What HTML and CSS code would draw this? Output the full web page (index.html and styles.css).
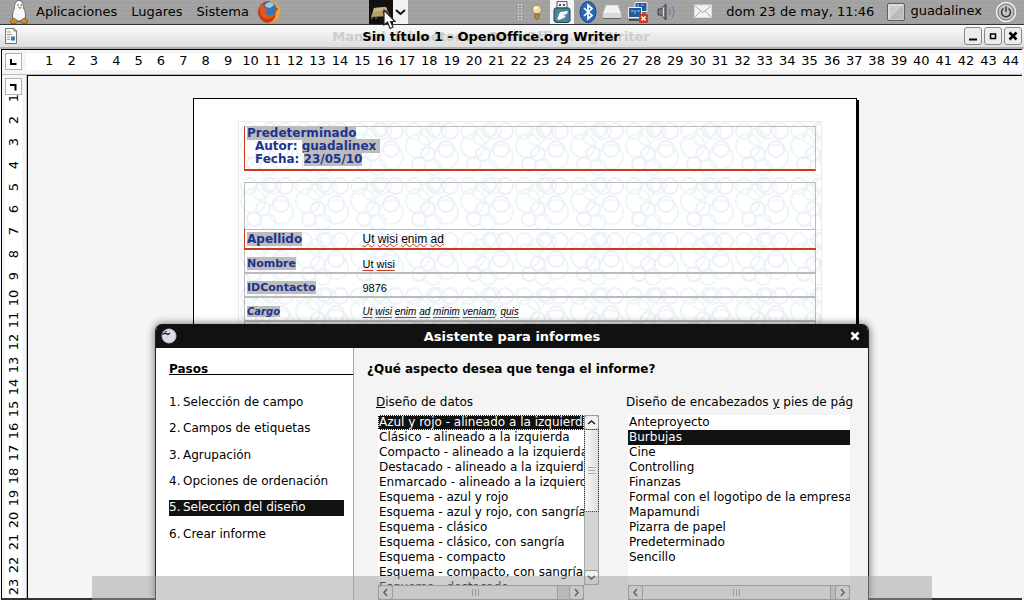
FILE: index.html
```html
<!DOCTYPE html>
<html lang="es">
<head>
<meta charset="utf-8">
<title>Sin título 1 - OpenOffice.org Writer</title>
<link rel="stylesheet" href="styles.css">
</head>
<body>
<header class="panel">
  <nav class="menus">
    <svg class="penguin" width="20" height="24" viewBox="0 0 20 24"><path d="M10 0C6 0 5.500 4 5.500 7C4 10 2.500 14 3 18L6 22H14L17 18C17.500 14 16 10 14.500 7C14.500 3 14 0 10 0Z" fill="#6a7078"/><path d="M10 1C7 1 6 4 6 8C4 12 3.500 16 4.500 19Q10 22 15.500 19C16.500 15 16 11 14 8C14 3 13 1 10 1Z" fill="#f7f8fa"/><circle cx="9" cy="5" r=".8" fill="#444"/><circle cx="12.500" cy="5" r=".8" fill="#444"/><path d="M9 6.500L13 7L11 9.500Z" fill="#e08a1c"/><path d="M1 21L5 18L9 21L7 23.500H2ZM19 21L15 18L11 21L13 23.500H18Z" fill="#c98a2a" stroke="#684613" stroke-width=".6"/></svg>
    <button class="menu">Aplicaciones</button>
    <button class="menu">Lugares</button>
    <button class="menu">Sistema</button>
    <button class="launcher" aria-label="Firefox"><svg width="26" height="24" viewBox="0 0 26 24"><circle cx="13" cy="12" r="11" fill="#c73a16"/><path d="M13 1C20 0 25 6 24.500 12C24 20 17 24 12 23C18 21 20 17 19.500 12L22 9Z" fill="#e8a33c"/><circle cx="13.500" cy="9" r="7" fill="#3b74b5"/><path d="M9 5C12 1 17 2 18 5L14 8L10 7Z" fill="#9ccbea"/><path d="M3 6L7 4L8 8L12 10L9 13C11 16 15 16 19 14C17 20 8 20 5 15Z" fill="#de5b1f"/></svg></button>
  </nav>
  <div class="applet">
    <span class="applet-icon"><svg width="24" height="24" viewBox="0 0 24 24"><path d="M5 8L17 7L21 16L2 17Z" fill="#b3a06b"/><path d="M5 8L17 7L18 10L4 12Z" fill="#c5b58a"/><path d="M3 17V19M7 17V19" stroke="#8d8470"/><path d="M13 12L18 10L21 17H16Z" fill="#c62d14"/></svg></span>
    <button class="applet-more" aria-label="Mostrar más"><svg width="15" height="24" viewBox="0 0 15 24"><path d="M3 10L7.500 14L12 10" fill="none" stroke="#111" stroke-width="2"/></svg></button>
    <svg class="cursor" width="14" height="22" viewBox="0 0 14 22"><path d="M1 1V16L4.500 13L7 19.500L10 18L7.500 12.500H12Z" fill="#fff" stroke="#222" stroke-width="1.200"/></svg>
  </div>
  <div class="tray">
    <span class="handle"></span>
    <svg width="16" height="24" viewBox="0 0 16 24"><circle cx="8" cy="9.500" r="4.500" fill="#efdca6" stroke="#a08648"/><circle cx="6.500" cy="8" r="1.800" fill="#fff8df"/><path d="M6 14H10V18L8 20L6 18Z" fill="#b88e35" stroke="#72591f" stroke-width=".7"/></svg>
    <svg class="usb" width="24" height="24" viewBox="0 0 24 24"><path d="M7 1.500H17V8H7Z" fill="#f0f0ee" stroke="#575d61"/><path d="M9 4H11V6H9ZM13 4H15V6H13Z" fill="#555"/><path d="M5 8H19L20 10V21Q19 22.500 17 22.500H7Q5 22.500 4 21V10Z" fill="#4b8499" stroke="#214756"/><path d="M7 19L10 12L18 11L17 14L13 15L16 16L14 18L9 20Z" fill="#f4fafb"/></svg>
    <svg width="18" height="24" viewBox="0 0 18 24"><ellipse cx="9" cy="12" rx="8" ry="10.500" fill="#2869b3" stroke="#174c8b"/><path d="M5 8L13 15.500L9 19V5L13 8.500L5 16" fill="none" stroke="#fff" stroke-width="1.700"/></svg>
    <svg width="20" height="24" viewBox="0 0 20 24"><path d="M4 5H16L19 13V18H1V13Z" fill="#f1f1f0" stroke="#b4b4b4" stroke-width=".7"/><path d="M1 13H19V18Q10 20 1 18Z" fill="#d9d9d9"/><path d="M1 18.500H19" stroke="#666"/></svg>
    <svg width="22" height="24" viewBox="0 0 22 24"><path d="M8 2.500H20V11.500H8Z" fill="#245a9c" stroke="#e8edf3"/><path d="M9 13H19" stroke="#333"/><path d="M1.500 7.500H14.500V17.500H1.500Z" fill="#245a9c" stroke="#eef1f4"/><path d="M4 11H7M8 10V14M10 11H13M11 4V7M14 5H17" stroke="#9fc3e3"/><path d="M2 20H13" stroke="#333" stroke-width="1.500"/><rect x="12" y="14" width="9" height="9" rx="1.500" fill="#cf3b1d"/><path d="M14.500 16.500L18.500 20.500M18.500 16.500L14.500 20.500" stroke="#fff" stroke-width="1.600"/></svg>
    <svg width="24" height="24" viewBox="0 0 24 24"><path d="M4 9H7L12 4V20L7 15H4Z" fill="#75797c" stroke="#3f4346"/><path d="M9.500 7V17" stroke="#ddd"/><path d="M15 9Q17 12 15 15M18 6.500Q22 12 18 17.500" fill="none" stroke="#6585ad" stroke-width="1.300"/></svg>
  </div>
  <div class="session">
    <svg width="20" height="24" viewBox="0 0 20 24"><rect x="1.500" y="5" width="17" height="12.500" fill="#f3f3f1" stroke="#ddd"/><path d="M2 6L10 12.500L18 6M2 17L8 11M18 17L12 11" fill="none" stroke="#aaa"/></svg>
    <time>dom 23 de may, 11:46</time>
    <button class="user"><svg width="18" height="24" viewBox="0 0 18 24"><rect x=".5" y="3.500" width="17" height="17" rx="1.500" fill="#c9cccb" stroke="#5a6268"/><path d="M2 19L16 5V19Z" fill="#b9bdba"/><path d="M2 5H16M2 5V19" stroke="#eee"/></svg>guadalinex</button>
    <button class="power" aria-label="Apagar"><svg width="22" height="24" viewBox="0 0 22 24"><circle cx="11" cy="12" r="9.500" fill="#c2c2c0" stroke="#f0f0f0" stroke-width="1.500"/><circle cx="11" cy="12" r="8" fill="none" stroke="#777"/><path d="M11 6.500V12M8.500 8.500A4.500 4.500 0 1 0 13.500 8.500" fill="none" stroke="#333" stroke-width="1.400"/></svg></button>
  </div>
</header>

<div class="titlebar">
  <svg class="doc-icon" width="14" height="18" viewBox="0 0 14 18"><path d="M1.500 1.500H10L12.500 4V16.500H1.500Z" fill="#fafafa" stroke="#75736c"/><path d="M3 5H7M3 7.500H8M3 10H6M3 12.500H6" stroke="#999"/><path d="M10 1.500V4H12.500" fill="none" stroke="#777"/><rect x="7" y="9.500" width="4" height="4" fill="#397bbb"/></svg>
  <div class="titles"><span class="ghost" aria-hidden="true">Manual del método - OpenOffice.org Writer</span><h1>Sin título 1 - OpenOffice.org Writer</h1></div>
  <div class="win-buttons">
    <button aria-label="Minimizar"><svg width="16" height="16" viewBox="0 0 16 16"><path d="M4 11.500H12" stroke="#000" stroke-width="2"/></svg></button>
    <button aria-label="Maximizar"><svg width="16" height="16" viewBox="0 0 16 16"><path d="M5.500 6H10.500V10.500H5.500Z" fill="none" stroke="#000" stroke-width="1.500"/></svg></button>
    <button aria-label="Cerrar"><svg width="16" height="16" viewBox="0 0 16 16"><path d="M4.500 4.500L11.500 11.500M11.500 4.500L4.500 11.500" stroke="#000" stroke-width="2.500"/></svg></button>
  </div>
</div>

<main class="writer">
  <div class="ruler-top">
    <button class="tab-kind" aria-label="Tabulador izquierdo"><svg width="14" height="14" viewBox="0 0 14 14"><path d="M5 4V9H10.500" fill="none" stroke="#000" stroke-width="2"/></svg></button>
    <div class="ruler-h" id="ruler-h"></div>
  </div>
  <div class="work">
    <div class="ruler-side">
      <button class="tab-kind" aria-label="Tabulador derecho"><svg width="14" height="14" viewBox="0 0 14 14"><path d="M4 5H9.500V10.500" fill="none" stroke="#000" stroke-width="2"/></svg></button>
      <div class="ruler-v" id="ruler-v"></div>
    </div>
    <div class="canvas">
      <article class="page">
        <div class="report">
          <svg class="bubbles" width="100%" height="100%" aria-hidden="true">
            <defs><pattern id="bubble" width="55" height="55" patternUnits="userSpaceOnUse"><g fill="none" stroke-width="2">
              <g stroke="#ebf8f3"><circle cx="14" cy="24" r="12"/><circle cx="22" cy="15" r="8"/><circle cx="42" cy="35" r="12"/><circle cx="34" cy="9" r="8"/></g>
              <g stroke="#efeefb"><circle cx="42" cy="27" r="8"/><circle cx="24" cy="32" r="7"/><circle cx="30" cy="8" r="7"/><circle cx="15" cy="42" r="7"/><circle cx="46" cy="9" r="8"/></g>
              <g stroke="#ecf5fa"><circle cx="10" cy="9" r="8"/><circle cx="29" cy="45" r="8"/></g>
            </g></pattern></defs>
            <rect width="100%" height="100%" fill="url(#bubble)"/>
          </svg>
          <header class="report-head">
            <p class="report-title"><mark>Predeterminado</mark></p>
            <p class="report-meta">Autor: <mark>guadalinex</mark> <mark class="caret"></mark></p>
            <p class="report-meta">Fecha: <mark>23/05/10</mark></p>
          </header>
          <table class="records">
            <colgroup><col class="names"><col></colgroup>
            <tbody>
            <tr class="blank"><td colspan="2"></td></tr>
            <tr class="group"><th scope="row"><mark>Apellido</mark></th><td><u>Ut</u> <u>wisi</u> <u>enim</u> <u>ad</u></td></tr>
            <tr class="field"><th scope="row"><mark>Nombre</mark></th><td><u>Ut</u> <u>wisi</u></td></tr>
            <tr class="field"><th scope="row"><mark>IDContacto</mark></th><td>9876</td></tr>
            <tr class="field slanted"><th scope="row"><mark>Cargo</mark></th><td><u>Ut</u> <u>wisi</u> <u>enim</u> <u>ad</u> <u>minim</u> <u>veniam</u>, <u>quis</u></td></tr>
            <tr class="field"><th scope="row"></th><td></td></tr>
            </tbody>
          </table>
        </div>
      </article>
    </div>
  </div>
</main>

<section class="dialog" role="dialog" aria-labelledby="dialog-title">
  <header class="dialog-bar">
    <svg width="16" height="16" viewBox="0 0 16 16"><circle cx="8" cy="8" r="7" fill="#dadce6" stroke="#b8bfd0"/><path d="M1.500 6.500L4 5L7 6.500L9 5" fill="none" stroke="#222" stroke-width="1.400"/><path d="M4 3L6 4" stroke="#444"/></svg>
    <h2 id="dialog-title">Asistente para informes</h2>
    <button aria-label="Cerrar"><svg width="16" height="16" viewBox="0 0 16 16"><path d="M4.500 4.500L11.500 11.500M11.500 4.500L4.500 11.500" stroke="#fff" stroke-width="2.500"/></svg></button>
  </header>
  <div class="dialog-body">
    <nav class="steps">
      <h3>Pasos</h3>
      <ol>
        <li><button><span>1.</span>Selección de campo</button></li>
        <li><button><span>2.</span>Campos de etiquetas</button></li>
        <li><button><span>3.</span>Agrupación</button></li>
        <li><button><span>4.</span>Opciones de ordenación</button></li>
        <li><button class="current" aria-current="step"><span>5.</span>Selección del diseño</button></li>
        <li><button><span>6.</span>Crear informe</button></li>
      </ol>
    </nav>
    <div class="choices">
      <h3>¿Qué aspecto desea que tenga el informe?</h3>
      <div class="lists">
        <div class="choice">
          <label for="data-layout"><span class="key">D</span>iseño de datos</label>
          <div class="list-frame with-scroll">
            <select id="data-layout" class="list dotted" size="12">
              <option selected>Azul y rojo - alineado a la izquierda</option>
              <option>Clásico - alineado a la izquierda</option>
              <option>Compacto - alineado a la izquierda</option>
              <option>Destacado - alineado a la izquierda</option>
              <option>Enmarcado - alineado a la izquierda</option>
              <option>Esquema - azul y rojo</option>
              <option>Esquema - azul y rojo, con sangría</option>
              <option>Esquema - clásico</option>
              <option>Esquema - clásico, con sangría</option>
              <option>Esquema - compacto</option>
              <option>Esquema - compacto, con sangría</option>
              <option>Esquema - destacado</option>
            </select>
            <div class="vscroll">
              <button aria-label="Subir"><svg width="13" height="13" viewBox="0 0 13 13"><path d="M3 8L6.500 5L10 8" fill="none" stroke="#222" stroke-width="1.500"/></svg></button>
              <span class="vthumb"></span>
              <button aria-label="Bajar"><svg width="13" height="13" viewBox="0 0 13 13"><path d="M3 5L6.500 8L10 5" fill="none" stroke="#222" stroke-width="1.500"/></svg></button>
            </div>
            <div class="hscroll">
              <button aria-label="Izquierda"><svg width="13" height="13" viewBox="0 0 13 13"><path d="M8 3L5 6.500L8 10" fill="none" stroke="#222" stroke-width="1.500"/></svg></button>
              <span class="hthumb"></span>
              <button aria-label="Derecha"><svg width="13" height="13" viewBox="0 0 13 13"><path d="M5 3L8 6.500L5 10" fill="none" stroke="#222" stroke-width="1.500"/></svg></button>
            </div>
          </div>
        </div>
        <div class="choice">
          <label for="page-layout">Diseño de encabezados <span class="key">y</span> pies de pág</label>
          <div class="list-frame">
            <select id="page-layout" class="list" size="12">
              <option>Anteproyecto</option>
              <option selected>Burbujas</option>
              <option>Cine</option>
              <option>Controlling</option>
              <option>Finanzas</option>
              <option>Formal con el logotipo de la empresa</option>
              <option>Mapamundi</option>
              <option>Pizarra de papel</option>
              <option>Predeterminado</option>
              <option>Sencillo</option>
            </select>
            <div class="hscroll wide">
              <button aria-label="Izquierda"><svg width="13" height="13" viewBox="0 0 13 13"><path d="M8 3L5 6.500L8 10" fill="none" stroke="#222" stroke-width="1.500"/></svg></button>
              <span class="hthumb"></span>
              <button aria-label="Derecha"><svg width="13" height="13" viewBox="0 0 13 13"><path d="M5 3L8 6.500L5 10" fill="none" stroke="#222" stroke-width="1.500"/></svg></button>
            </div>
          </div>
        </div>
      </div>
    </div>
  </div>
</section>
<div class="dock"></div>
<script src="rulers.js"></script>
</body>
</html>
```

FILE: rulers.js
```js
function fill(id, count) {
  const ruler = document.getElementById(id);
  for (let n = 1; n <= count; n++) {
    const mark = document.createElement("span");
    mark.textContent = n;
    ruler.append(mark);
  }
}
fill("ruler-h", 44);
fill("ruler-v", 23);
```

FILE: styles.css
```css
* { box-sizing: border-box; }
body {
  margin: 0;
  height: 100vh;
  overflow: hidden;
  position: relative;
  display: flex;
  flex-direction: column;
  font: 13px/15px "DejaVu Sans", sans-serif;
  color: #000;
  background: #f5f5f5;
}
button { font: inherit; color: inherit; background: none; border: 0; padding: 0; }
h1, h2, h3, p, ol { margin: 0; padding: 0; font-size: 13px; line-height: 15px; }
svg { display: block; flex: none; }

.panel {
  display: flex;
  align-items: center;
  height: 25px;
  padding: 0 7px 0 9px;
  border-bottom: 1px solid #333;
  background: repeating-linear-gradient(#a4a4a4 0 2px, #a0a0a0 2px 4px);
  line-height: 22px;
  white-space: nowrap;
}
.menus { display: flex; align-items: center; gap: 14px; }
.penguin { margin-right: -7px; }
.launcher { margin-left: -7px; }
.applet { position: relative; display: flex; margin-left: 87px; }
.applet-icon { background: #111; }
.applet-more { background: #f2f2f2; }
.cursor { position: absolute; left: 14px; top: 9px; z-index: 2; }
.tray { display: flex; align-items: center; gap: 5px; margin-left: auto; }
.handle { width: 7px; height: 18px; background: radial-gradient(#eee 1px, transparent 1px) 0 0 / 3px 3px; }
.usb { background: #f4f4f4; }
.session { display: flex; align-items: center; gap: 13px; margin-left: 15px; }
.user { display: flex; gap: 5px; }

.titlebar {
  display: flex;
  align-items: center;
  height: 24px;
  padding: 0 2px 0 4px;
  border-bottom: 2px solid #b0b0b0;
  background: linear-gradient(#fafafa, #dedede);
}
.titles { flex: 1; display: grid; justify-items: center; }
.titles h1, .ghost { grid-area: 1 / 1; font-weight: bold; font-size: 13px; position: relative; }
.ghost { color: #ccc; }
.win-buttons { display: flex; gap: 2px; }
.win-buttons button { width: 18px; height: 18px; border: 1px solid #888; border-radius: 3px; background: #ececec; }

.writer {
  flex: 1;
  min-height: 0;
  display: flex;
  flex-direction: column;
  border: 1px solid #000;
  border-right: 0;
  border-bottom: 2px solid #333;
  margin: 0 2px 0 1px;
}
.ruler-top { display: flex; gap: 4px; padding: 3px 0 0 3px; height: 25px; border-bottom: 1px solid #bbb; flex: none; }
.tab-kind { flex: none; width: 17px; height: 17px; border: 1px solid #b0b0b0; background: #fff; }
.ruler-h {
  flex: 1;
  display: grid;
  grid-template-columns: repeat(44, 1fr);
  height: 17px;
  padding-left: 12px;
  background: #fff;
  line-height: 16px;
  text-align: center;
}
.work { flex: 1; min-height: 0; display: flex; }
.ruler-side { width: 25px; flex: none; display: flex; flex-direction: column; padding: 3px 0 0 3px; border-right: 1px solid #bbb; }
.ruler-v {
  flex: 1;
  min-height: 0;
  width: 17px;
  margin-top: -8px;
  display: grid;
  grid-template-rows: repeat(23, 1fr);
  background: #fff;
}
.ruler-side .tab-kind { position: relative; z-index: 1; }
.ruler-v span { min-height: 0; writing-mode: vertical-rl; transform: rotate(180deg); text-align: center; line-height: 17px; white-space: nowrap; }
.canvas { flex: 1; min-width: 0; border: 1px solid #000; border-right: 0; border-bottom: 0; overflow: hidden; padding-top: 22px; }
.page {
  width: calc(100% - 330px);
  height: 100%;
  margin: 0 auto;
  padding: 22px 34px 0 44px;
  background: #fff;
  border: 1px solid #000;
  box-shadow: 2px 2px 0 #000;
}
.report { position: relative; height: 100%; padding: 4px 5px; border: 1px solid #e8e8f7; }
.bubbles { position: absolute; inset: 0; }
.report-head {
  position: relative;
  height: 45px;
  border: 1px solid #bbb;
  border-left-color: #cb3a20;
  border-bottom: 2px solid #cb3a20;
  padding-left: 2px;
  font-weight: bold;
  color: #1c348c;
}
.report-head p { font-size: 12px; line-height: 13px; }
.report-head .report-meta { padding-left: 8px; }
mark { background: #bcbcbc; color: inherit; }
.caret { padding-left: 4px; }
.records { position: relative; width: 100%; margin-top: 11px; border-collapse: collapse; table-layout: fixed; border: 1px solid #bbb; }
.names { width: 116px; }
.records th, .records td { padding: 0 2px; text-align: left; font-size: 12px; line-height: 14px; }
.records th { color: #1c348c; }
.records td { font-family: "Liberation Sans", sans-serif; }
.records u { text-decoration: underline #cb3a20; text-underline-offset: 2px; }
.blank td { height: 47px; }
.group { height: 19px; border-top: 1px solid #bbb; border-bottom: 2px solid #cb3a20; }
.group th { border-left: 1px solid #cb3a20; }
.group u { text-decoration-style: wavy; text-decoration-thickness: 1px; text-underline-offset: 0; }
.field { height: 24px; border-bottom: 2px solid #bbb; }
.records .field th, .records .field td { font-size: 11px; line-height: 12px; padding-top: 6px; }
.records .slanted th, .records .slanted td { font-size: 10px; font-style: italic; }

.dialog {
  position: absolute;
  top: 324px;
  bottom: 0;
  left: 0;
  right: 0;
  width: calc(100% - 310px);
  margin: 0 auto;
  display: flex;
  flex-direction: column;
  border: 1px solid #222;
  border-width: 0 1px;
  border-radius: 7px 7px 0 0;
  background: #f4f4f4;
  box-shadow: 0 0 8px rgba(0, 0, 0, .6);
  overflow: hidden;
}
.dialog-bar { display: flex; align-items: center; flex: none; height: 24px; padding: 0 5px; background: #111; color: #fff; }
.dialog-bar h2 { flex: 1; text-align: center; }
.dialog-body { flex: 1; min-height: 0; display: flex; }
.steps { width: 198px; flex: none; padding: 14px 0 0 13px; background: #fff; border-right: 1px solid #aaa; }
.steps h3 { height: 13px; border-bottom: 1px solid #000; font-size: 12px; }
.steps ol { list-style: none; display: grid; grid-template-rows: repeat(6, 1fr); align-items: center; height: 158px; margin-top: 15px; }
.steps button { display: flex; width: 175px; height: 16px; line-height: 15px; text-align: left; white-space: nowrap; font-size: 12px; }
.steps button span { width: 14px; }
.steps .current { background: #111; color: #fff; }
.choices { flex: 1; min-width: 0; padding: 14px 16px 0 13px; }
.choices h3 { font-size: 12px; }
.lists { display: grid; grid-template-columns: 223px 1fr; gap: 27px; margin-top: 18px; padding-left: 9px; }
.choice { min-width: 0; }
.choice label { display: block; height: 20px; white-space: nowrap; font-size: 12px; }
.key { text-decoration: underline; }
.list-frame { display: grid; grid-template-columns: 1fr; grid-template-rows: 170px 15px; padding: 0 2px; }
.list-frame.with-scroll { grid-template-columns: 1fr 15px; padding-right: 0; }
.list {
  display: block;
  width: 100%;
  height: 170px;
  min-width: 0;
  margin: 0;
  padding: 0;
  border: 0;
  border-radius: 0;
  outline: 0;
  background: #fff;
  color: #000;
  font: 12px/15px "DejaVu Sans", sans-serif;
  overflow: hidden;
  scrollbar-width: none;
}
.list option { height: 15px; min-height: 15px; line-height: 15px; padding: 0 1px; overflow: hidden; }
.list option:checked { background: #111 linear-gradient(#111, #111); color: #fff; }
.list.dotted option:checked { outline: 1px dotted #fff; outline-offset: -1px; }
.vscroll { display: flex; flex-direction: column; justify-content: space-between; border: 1px solid #aaa; background: #d4d4d4; }
.vscroll button, .hscroll button { width: 13px; height: 13px; background: #f1f1f1; border-radius: 2px; outline: 1px solid #999; flex: none; }
.vthumb {
  height: 81px;
  margin: 1px 0 auto;
  outline: 1px dotted #2a3f94;
  background: repeating-linear-gradient(#aaa 0 1px, transparent 1px 3px) center / 7px 7px no-repeat, linear-gradient(90deg, #fafafa, #dedede);
}
.hscroll { display: flex; justify-content: space-between; border: 1px solid #999; background: #d4d4d4; }
.hthumb {
  flex: 1;
  margin: 0 12px 0 1px;
  border-right: 1px solid #999;
  background: repeating-linear-gradient(90deg, #999 0 1px, transparent 1px 3px) center / 7px 7px no-repeat, #f3f3f3;
}
.wide .hthumb { margin-right: 5px; }

.dock {
  position: absolute;
  bottom: 0;
  left: 0;
  right: 0;
  width: 82%;
  height: 24px;
  margin: 0 auto;
  background: rgba(160, 160, 160, .5);
}
```
